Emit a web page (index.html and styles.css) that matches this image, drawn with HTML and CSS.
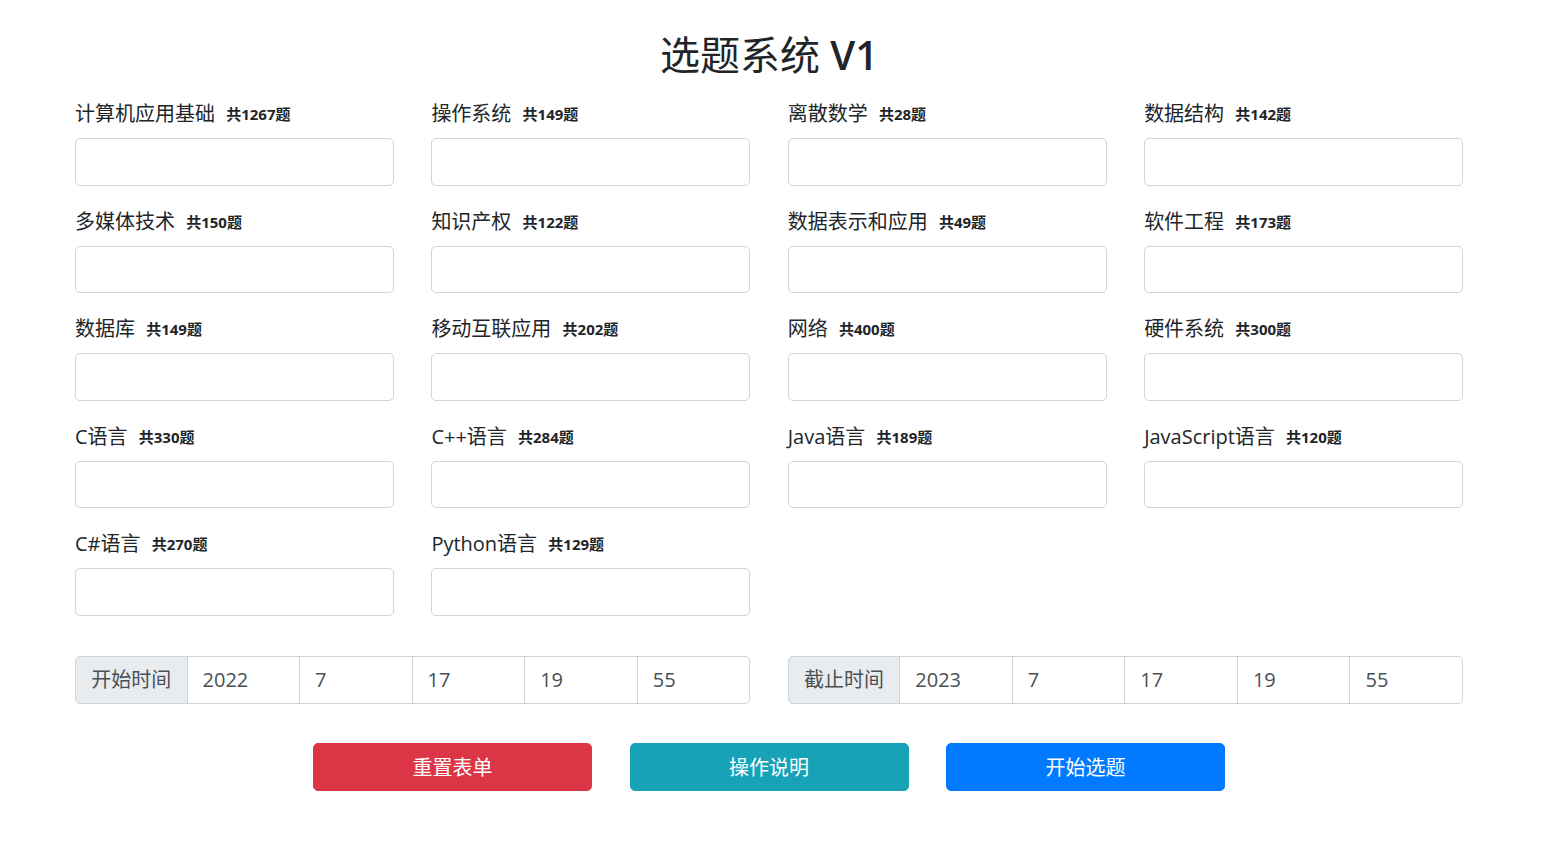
FILE: index.html
```html
<!DOCTYPE html>
<html lang="zh-CN">
<head>
<meta charset="utf-8">
<title>选题系统 V1</title>
<link rel="stylesheet" href="styles.css">
</head>
<body>
<div class="page">
  <h2 class="title">选题系统 <span class="ver">V1</span></h2>
  <form class="subjects">
    <div class="field"><label>计算机应用基础 <span class="badge">共1267题</span></label><input class="control" type="text"></div>
    <div class="field"><label>操作系统 <span class="badge">共149题</span></label><input class="control" type="text"></div>
    <div class="field"><label>离散数学 <span class="badge">共28题</span></label><input class="control" type="text"></div>
    <div class="field"><label>数据结构 <span class="badge">共142题</span></label><input class="control" type="text"></div>
    <div class="field"><label>多媒体技术 <span class="badge">共150题</span></label><input class="control" type="text"></div>
    <div class="field"><label>知识产权 <span class="badge">共122题</span></label><input class="control" type="text"></div>
    <div class="field"><label>数据表示和应用 <span class="badge">共49题</span></label><input class="control" type="text"></div>
    <div class="field"><label>软件工程 <span class="badge">共173题</span></label><input class="control" type="text"></div>
    <div class="field"><label>数据库 <span class="badge">共149题</span></label><input class="control" type="text"></div>
    <div class="field"><label>移动互联应用 <span class="badge">共202题</span></label><input class="control" type="text"></div>
    <div class="field"><label>网络 <span class="badge">共400题</span></label><input class="control" type="text"></div>
    <div class="field"><label>硬件系统 <span class="badge">共300题</span></label><input class="control" type="text"></div>
    <div class="field"><label>C语言 <span class="badge">共330题</span></label><input class="control" type="text"></div>
    <div class="field"><label>C++语言 <span class="badge">共284题</span></label><input class="control" type="text"></div>
    <div class="field"><label>Java语言 <span class="badge">共189题</span></label><input class="control" type="text"></div>
    <div class="field"><label>JavaScript语言 <span class="badge">共120题</span></label><input class="control" type="text"></div>
    <div class="field"><label>C#语言 <span class="badge">共270题</span></label><input class="control" type="text"></div>
    <div class="field"><label>Python语言 <span class="badge">共129题</span></label><input class="control" type="text"></div>
  </form>
  <div class="times">
    <div class="group">
      <span class="prepend">开始时间</span>
      <input class="gi" type="text" size="1" value="2022">
      <input class="gi" type="text" size="1" value="7">
      <input class="gi" type="text" size="1" value="17">
      <input class="gi" type="text" size="1" value="19">
      <input class="gi last" type="text" size="1" value="55">
    </div>
    <div class="group">
      <span class="prepend">截止时间</span>
      <input class="gi" type="text" size="1" value="2023">
      <input class="gi" type="text" size="1" value="7">
      <input class="gi" type="text" size="1" value="17">
      <input class="gi" type="text" size="1" value="19">
      <input class="gi last" type="text" size="1" value="55">
    </div>
  </div>
  <div class="actions">
    <button class="btn red" type="button">重置表单</button>
    <button class="btn teal" type="button">操作说明</button>
    <button class="btn blue" type="button">开始选题</button>
  </div>
</div>
</body>
</html>
```
FILE: styles.css
```css
* { box-sizing: border-box; }
html, body { margin: 0; padding: 0; background: #fff; }
body {
  font-family: "Open Sans", "Noto Sans CJK SC", sans-serif;
  font-size: 20px;
  line-height: 1.5;
  color: #212529;
  padding-right: 7px;
}
.page {
  width: 1388px;
  margin: 0 auto;
  padding-top: 31px;
}
.title {
  margin: 0 0 19px;
  font-size: 40px;
  line-height: 48px;
  font-weight: 400;
  text-align: center;
  color: #212529;
}
.ver { font-weight: 600; }
.subjects {
  display: grid;
  grid-template-columns: repeat(4, minmax(0, 1fr));
  column-gap: 37.5px;
  margin: 0;
}
.field {
  margin-bottom: 20px;
  display: flex;
  flex-direction: column;
}
.field label {
  display: block;
  margin-bottom: 10px;
  line-height: 30px;
  padding-top: 1px;
  height: 30px;
  white-space: nowrap;
}
.badge {
  display: inline-block;
  padding: 0 6px;
  font-size: 15px;
  font-weight: 700;
  line-height: 1;
  vertical-align: 1px;
}
.control {
  display: block;
  width: 100%;
  height: 47.5px;
  border: 1px solid #ced4da;
  border-radius: 5px;
  background: #fff;
  font: inherit;
  padding: 0 15px;
}
.times {
  display: grid;
  grid-template-columns: repeat(2, minmax(0, 1fr));
  column-gap: 37.5px;
  margin-top: 20.5px;
}
.group {
  display: grid;
  grid-template-columns: repeat(6, minmax(0, 1fr));
  height: 47.5px;
  min-width: 0;
}
.prepend, .gi {
  width: 100%;
  min-width: 0;
  height: 100%;
  font: inherit;
  font-size: 20px;
  color: #495057;
  border: 1px solid #ced4da;
  border-left: none;
  margin: 0;
}
.prepend {
  border-left: 1px solid #ced4da;
  background: #e9ecef;
  border-radius: 5px 0 0 5px;
  display: flex;
  align-items: center;
  justify-content: center;
  white-space: nowrap;
}
.gi {
  padding: 0 15px;
  background: #fff;
  border-radius: 0;
}
.gi.last { border-radius: 0 5px 5px 0; }
.actions {
  display: flex;
  justify-content: center;
  gap: 37.5px;
  margin-top: 39.5px;
}
.btn {
  width: 279px;
  height: 48px;
  padding: 2px 0 0;
  border: 1px solid transparent;
  border-radius: 5px;
  color: #fff;
  font: inherit;
  font-size: 20px;
  cursor: pointer;
}
.red { background: #dc3545; border-color: #dc3545; }
.teal { background: #17a2b8; border-color: #17a2b8; }
.blue { background: #007bff; border-color: #007bff; }
```
